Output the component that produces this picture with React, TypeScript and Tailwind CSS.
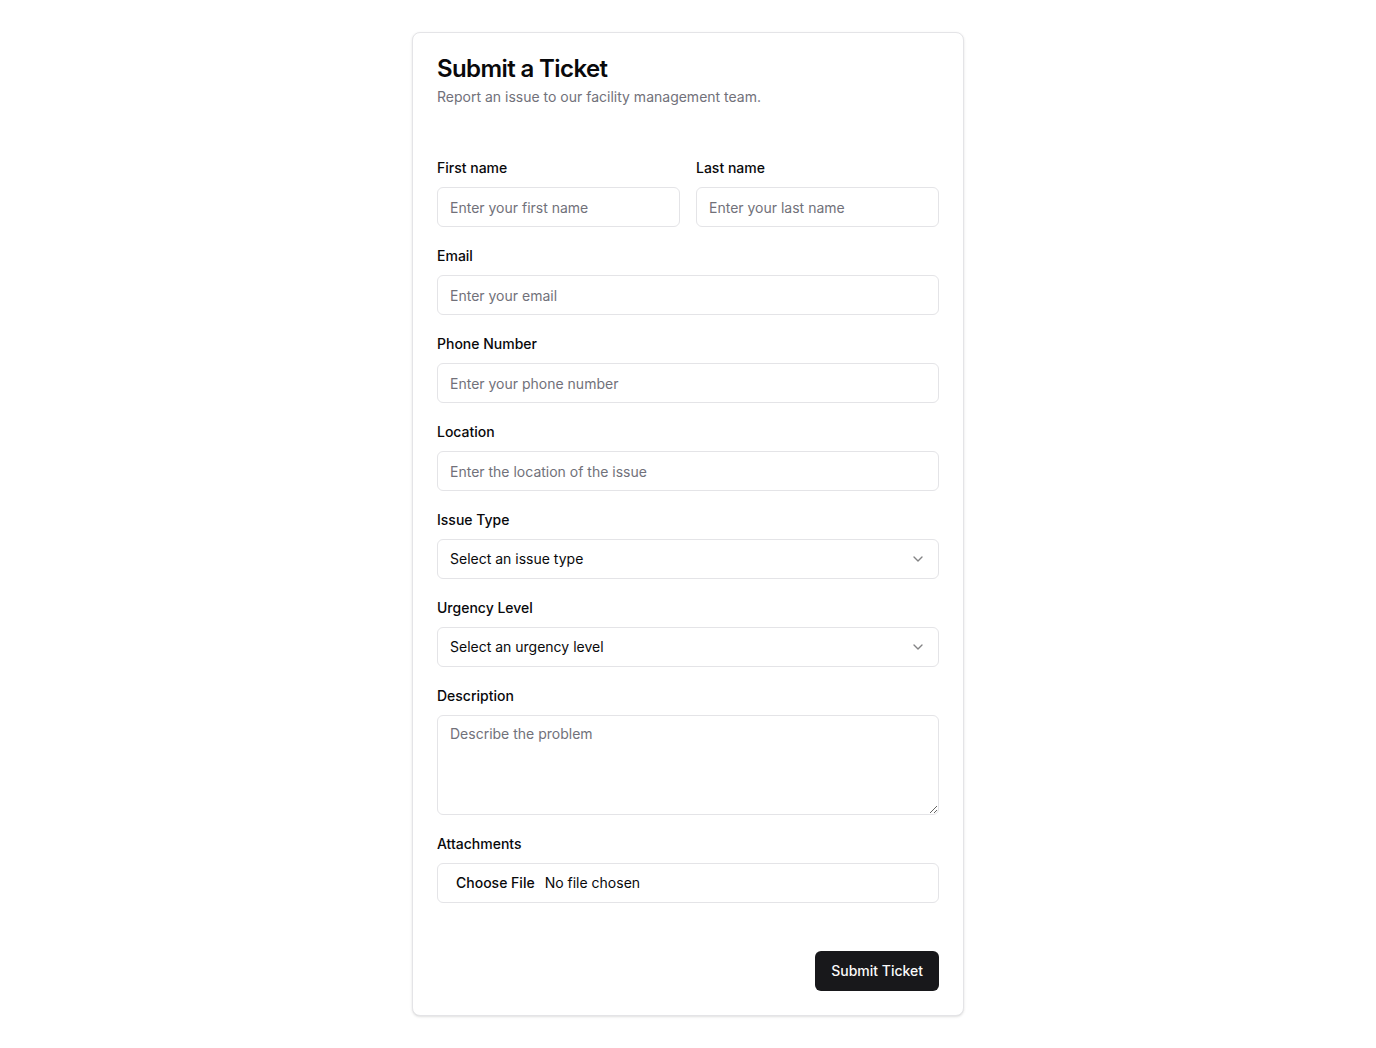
import { ChevronDown } from 'lucide-react'

const inputCls =
  'mt-[9px] flex h-10 w-full rounded-md border border-[#e4e4e7] bg-white px-3 py-2 text-sm text-[#09090b] placeholder:text-[#71717a] outline-none'

function Field({ label, children }: { label: string; children: React.ReactNode }) {
  return (
    <div className="flex flex-col">
      <label className="mt-px block text-sm leading-5 font-medium text-[#09090b]">{label}</label>
      {children}
    </div>
  )
}

function SelectBox({ text }: { text: string }) {
  return (
    <button
      type="button"
      className="mt-[9px] flex h-10 w-full items-center justify-between rounded-md border border-[#e4e4e7] bg-white px-3 py-2 text-left text-sm text-[#09090b]"
    >
      <span>{text}</span>
      <ChevronDown className="h-4 w-4 text-[#09090b] opacity-50" />
    </button>
  )
}

export default function App() {
  return (
    <div className="min-h-screen bg-white py-8 font-['Inter',sans-serif]">
      <div className="mx-auto w-[552px] rounded-lg border border-[#e4e4e7] bg-white shadow-sm">
        <div className="p-6">
          <h1 className="text-2xl leading-none font-semibold tracking-tight text-[#09090b]">
            Submit a Ticket
          </h1>
          <p className="mt-1.5 text-sm leading-5 text-[#71717a]">
            Report an issue to our facility management team.
          </p>
        </div>

        <form className="flex flex-col px-6 pt-[26px] pb-6" onSubmit={(e) => e.preventDefault()}>
          <div className="flex flex-col gap-[18px]">
            <div className="grid grid-cols-2 gap-4">
              <Field label="First name">
                <input className={inputCls} placeholder="Enter your first name" />
              </Field>
              <Field label="Last name">
                <input className={inputCls} placeholder="Enter your last name" />
              </Field>
            </div>
            <Field label="Email">
              <input type="email" className={inputCls} placeholder="Enter your email" />
            </Field>
            <Field label="Phone Number">
              <input type="tel" className={inputCls} placeholder="Enter your phone number" />
            </Field>
            <Field label="Location">
              <input className={inputCls} placeholder="Enter the location of the issue" />
            </Field>
            <Field label="Issue Type">
              <SelectBox text="Select an issue type" />
            </Field>
            <Field label="Urgency Level">
              <SelectBox text="Select an urgency level" />
            </Field>
            <Field label="Description">
              <textarea
                className="mt-[9px] h-[100px] w-full rounded-md border border-[#e4e4e7] bg-white px-3 py-2 text-sm text-[#09090b] placeholder:text-[#71717a] outline-none"
                placeholder="Describe the problem"
              />
            </Field>
            <Field label="Attachments">
              <input
                type="file"
                className="mt-[9px] flex h-10 w-full rounded-md border border-[#e4e4e7] bg-white px-3 pt-[9px] pb-[7px] text-sm text-[#09090b] file:mr-1 file:border-0 file:bg-transparent file:px-1.5 file:text-sm file:font-medium file:text-[#09090b]"
              />
            </Field>
          </div>

          <div className="mt-12 flex justify-end">
            <button
              type="submit"
              className="h-10 rounded-md bg-[#18181b] px-4 text-sm font-medium text-[#fafafa]"
            >
              Submit Ticket
            </button>
          </div>
        </form>
      </div>
    </div>
  )
}
